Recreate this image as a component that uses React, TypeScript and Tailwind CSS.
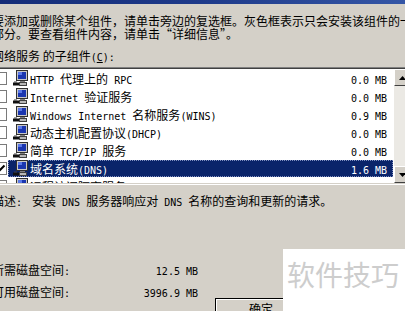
import React from "react";

function Mixed({ text }: { text: string }) {
  const parts = text.split(/([\x00-\x7F]+)/).filter((p) => p.length > 0);
  return (
    <>
      {parts.map((p, i) =>
        /^[\x00-\x7F]+$/.test(p) ? (
          <span key={i} className="font-['DejaVu_Sans_Mono',monospace] text-[10px] leading-none whitespace-pre">
            {p}
          </span>
        ) : (
          <span key={i} className="whitespace-pre">{p}</span>
        )
      )}
    </>
  );
}

function PcIcon() {
  return (
    <svg width="16" height="16" viewBox="0 0 16 16" className="shrink-0">
      <rect x="4.5" y="0.5" width="11" height="10" fill="#c8c8c8" stroke="#303030" />
      <rect x="6" y="2" width="8" height="7" fill="#1a36b0" />
      <rect x="6" y="2" width="4" height="3" fill="#5a78e8" />
      <rect x="8" y="11" width="5" height="1.5" fill="#808080" />
      <rect x="7.5" y="12.5" width="7" height="3" fill="#b8b8b8" stroke="#404040" />
      <path d="M1 12.5 h6 v3 h-6z" fill="#101010" />
      <path d="M2 11.5 h3 v1 h-3z" fill="#404040" />
    </svg>
  );
}

function Checkbox({ checked }: { checked?: boolean }) {
  return (
    <div className="w-[13px] h-[13px] shrink-0 bg-white border border-[#7a7a7a] flex items-center justify-center">
      {checked && (
        <svg width="11" height="11" viewBox="0 0 11 11">
          <path d="M1.5 5.5 L4 8 L9.5 2.5" stroke="#000" strokeWidth="2" fill="none" />
        </svg>
      )}
    </div>
  );
}

const rows = [
  { label: "HTTP 代理上的 RPC", size: "0.0 MB" },
  { label: "Internet 验证服务", size: "0.0 MB" },
  { label: "Windows Internet 名称服务(WINS)", size: "0.9 MB" },
  { label: "动态主机配置协议(DHCP)", size: "0.0 MB" },
  { label: "简单 TCP/IP 服务", size: "0.0 MB" },
  { label: "域名系统(DNS)", size: "1.6 MB", selected: true, checked: true },
  { label: "远程访问隔离服务", size: "0.0 MB" },
];

function ScrollButton({ up }: { up?: boolean }) {
  return (
    <div className="h-[17px] w-[16px] shrink-0 bg-[#d4d0c8] border border-t-white border-l-white border-r-[#404040] border-b-[#404040] flex items-center justify-center">
      <svg width="7" height="4" viewBox="0 0 7 4">
        {up ? <path d="M0 4 L3.5 0 L7 4z" fill="#000" /> : <path d="M0 0 L3.5 4 L7 0z" fill="#000" />}
      </svg>
    </div>
  );
}

export default function App() {
  return (
    <div className="relative w-[405px] h-[311px] overflow-hidden bg-[#d4d0c8] text-black font-['Noto_Sans_CJK_SC',sans-serif] text-[12px] leading-[13px]">
      <div className="h-[4px] bg-gradient-to-r from-[#142c78] via-[#1e3a8a] to-[#3556a6]" />
      <div className="-ml-[8px] flex flex-col">
        <div className="mt-[10px] whitespace-nowrap">
          <div className="h-[13px]">要添加或删除某个组件，请单击旁边的复选框。灰色框表示只会安装该组件的一</div>
          <div className="h-[13px]">部分。要查看组件内容，请单击“详细信息”。</div>
        </div>
        <div className="mt-[9px] h-[13px] whitespace-nowrap">
          网络服务 的子组件
          <span className="font-['DejaVu_Sans_Mono',monospace] text-[10px] leading-none">
            (<span className="underline">C</span>):
          </span>
        </div>
        <div className="mt-[5px] w-[420px] h-[118px] shrink-0 border border-t-[#808080] border-l-[#808080] border-r-white border-b-white">
          <div className="w-full h-full border border-t-[#404040] border-l-[#404040] border-r-[#d4d0c8] border-b-[#d4d0c8] bg-white flex">
            <div className="flex-1 flex flex-col overflow-hidden">
              {rows.map((r, i) => (
                <div key={i} className="h-[18px] shrink-0 flex items-center">
                  <Checkbox checked={r.checked} />
                  <div
                    className={
                      r.selected
                        ? "ml-[1px] mr-[1px] h-[17px] flex-1 flex items-center pl-[3px] pr-[5px] bg-[#0a246a] text-white border border-dotted border-[#8090c0]"
                        : "ml-[1px] mr-[1px] h-[17px] flex-1 flex items-center pl-[4px] pr-[6px]"
                    }
                  >
                    <PcIcon />
                    <div className="ml-[2px] flex-1 h-[13px] whitespace-nowrap">
                      <Mixed text={r.label} />
                    </div>
                    <div className="h-[13px] whitespace-nowrap">
                      <Mixed text={r.size} />
                    </div>
                  </div>
                </div>
              ))}
            </div>
            <div className="w-[16px] flex flex-col bg-[#ebe9e4]">
              <ScrollButton up />
              <div className="flex-1" />
              <ScrollButton />
            </div>
          </div>
        </div>
        <div className="mt-[9px] h-[13px] whitespace-nowrap flex">
          <span>
            描述<span className="font-['DejaVu_Sans_Mono',monospace] text-[10px] leading-none">:</span>
          </span>
          <span className="ml-[10px]">
            <Mixed text="安装 DNS 服务器响应对 DNS 名称的查询和更新的请求。" />
          </span>
        </div>
        <div className="mt-[56px] h-[13px] w-[206px] flex justify-between whitespace-nowrap">
          <span>
            所需磁盘空间<span className="font-['DejaVu_Sans_Mono',monospace] text-[10px] leading-none">:</span>
          </span>
          <span>
            <Mixed text="12.5 MB" />
          </span>
        </div>
        <div className="mt-[9px] h-[13px] w-[206px] flex justify-between whitespace-nowrap">
          <span>
            可用磁盘空间<span className="font-['DejaVu_Sans_Mono',monospace] text-[10px] leading-none">:</span>
          </span>
          <span>
            <Mixed text="3996.9 MB" />
          </span>
        </div>
        <div className="ml-[223px] w-[92px] h-[23px] shrink-0 border border-black">
          <div className="w-full h-full border border-t-white border-l-white border-r-[#808080] border-b-[#808080] flex justify-center pt-[2px]">
            确定
          </div>
        </div>
      </div>
      <div className="absolute left-[283px] top-[249px] w-[122px] h-[62px] bg-white pt-[11px] pl-[4px] whitespace-nowrap text-[28px] leading-[28px] text-[#cdcdcd] font-['Noto_Sans_CJK_SC',sans-serif]">
        软件技巧
      </div>
    </div>
  );
}
